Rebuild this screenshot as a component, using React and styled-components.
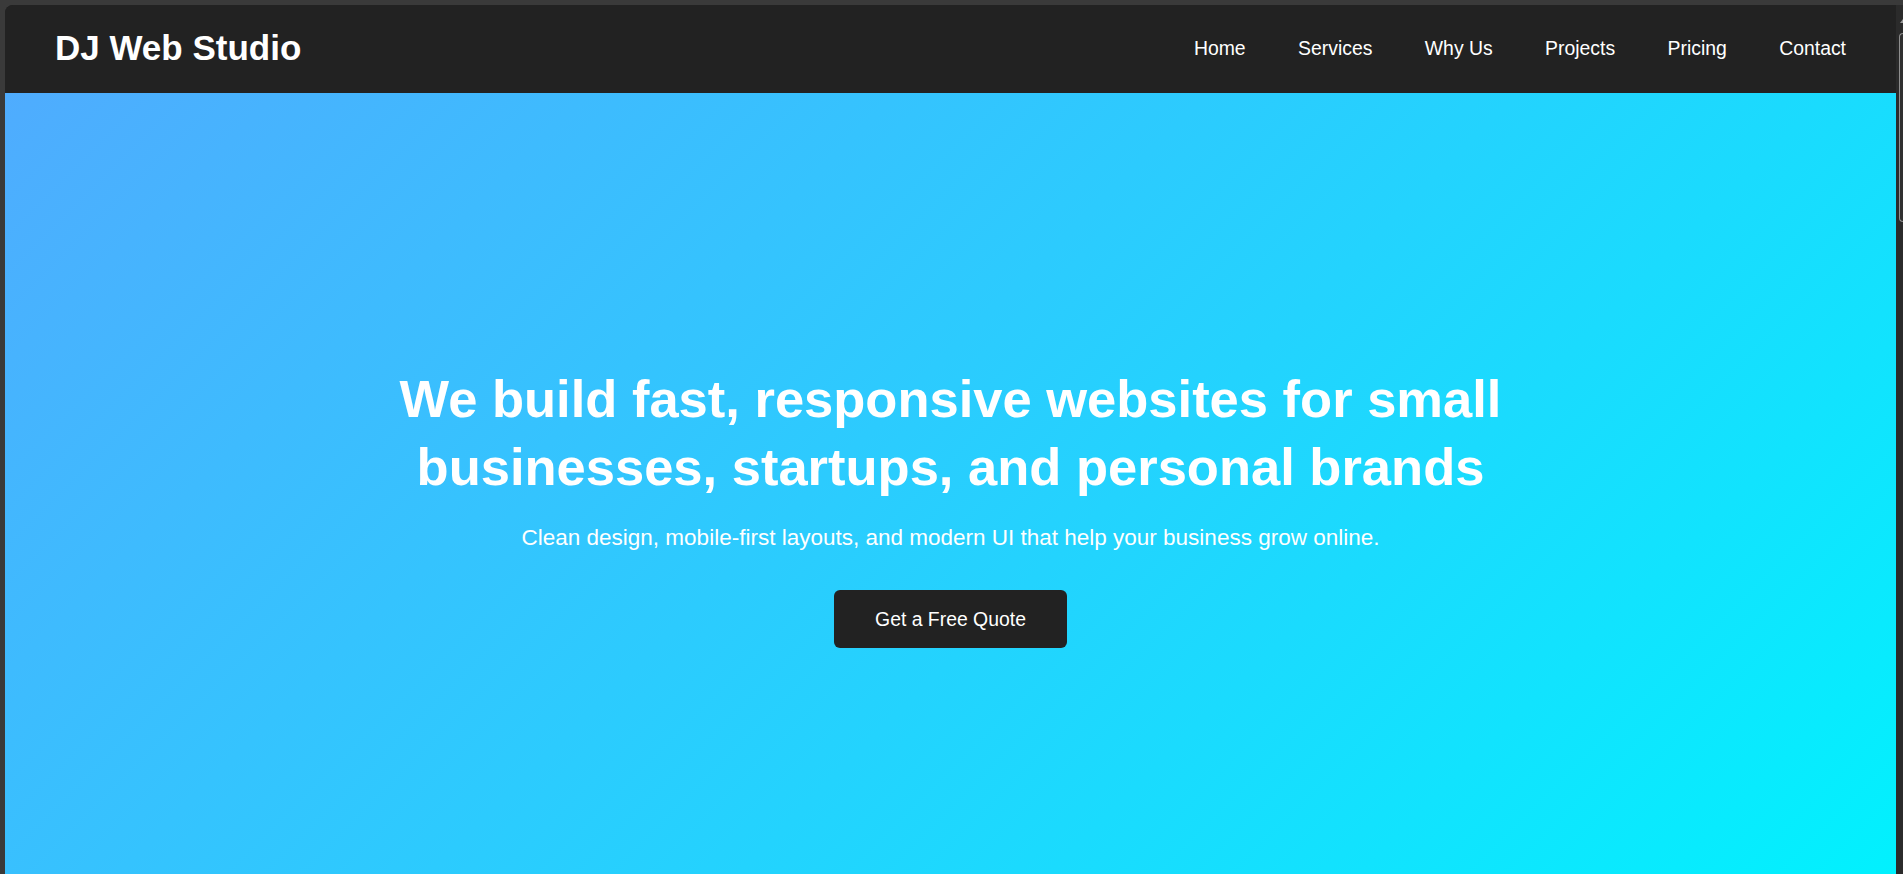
import styled, { createGlobalStyle } from "styled-components";

const GlobalStyle = createGlobalStyle`
    html, body {
        margin: 0;
        padding: 0;
        overflow: hidden;
    }
    body {
        font-family: "Liberation Sans", Arial, sans-serif;
    }
    * {
        box-sizing: border-box;
    }
`

const Frame = styled.div`
    display: flex;
    height: 100vh;
    padding: 5px 0 0 5px;
    background-color: #3a3a3a;
`
const Window = styled.div`
    flex: 1;
    display: flex;
    flex-direction: column;
    overflow: hidden;
    border-top-left-radius: 8px;
    background-color: #222222;
`
const ScrollTrack = styled.div`
    width: 7px;
    display: flex;
    flex-direction: column;
    align-items: flex-end;
    background-color: #2b2b2b;
`
const ScrollArrow = styled.div`
    margin-top: 14px;
    width: 0;
    height: 0;
    border-left: 3px solid transparent;
    border-bottom: 4px solid #9a9a9a;
`
const ScrollThumb = styled.div`
    margin-top: 10px;
    width: 4px;
    height: 189px;
    border: 1px solid #8f8f8f;
    border-right: none;
    border-radius: 4px 0 0 4px;
    background-color: #303030;
`

const Header = styled.header`
    flex-shrink: 0;
    height: 88px;
    display: flex;
    align-items: center;
    justify-content: space-between;
    padding: 0 50px 2px 50px;
    background-color: #222222;
`
const Logo = styled.h1`
    margin: 0;
    color: #ffffff;
    font-size: 35px;
    font-weight: 700;
`
const NavList = styled.ul`
    display: flex;
    gap: 52.4px;
    margin: 0;
    padding: 0;
    list-style: none;
`
const NavLink = styled.a`
    color: #ffffff;
    font-size: 19.4px;
    text-decoration: none;
`

const Hero = styled.section`
    flex-shrink: 0;
    min-height: 827px;
    display: flex;
    flex-direction: column;
    align-items: center;
    justify-content: center;
    text-align: center;
    color: #ffffff;
    background: linear-gradient(135deg, #4facfe 0%, #00f2fe 100%);
`
const Headline = styled.h2`
    max-width: 1150px;
    margin: 0;
    font-size: 52.5px;
    line-height: 68px;
    font-weight: 700;
`
const Subtitle = styled.p`
    margin: 24.5px 0 39px 0;
    font-size: 22.5px;
`
const QuoteButton = styled.button`
    padding: 17.5px 41.5px;
    border: none;
    border-radius: 6px;
    background-color: #222222;
    color: #ffffff;
    font-family: "Liberation Sans", Arial, sans-serif;
    font-size: 19.4px;
    line-height: 23px;
    cursor: pointer;
`

const links = ["Home", "Services", "Why Us", "Projects", "Pricing", "Contact"];

export default function App() {
    return (
        <>
            <GlobalStyle />
            <Frame>
                <Window>
                    <Header>
                        <Logo>DJ Web Studio</Logo>
                        <nav>
                            <NavList>
                                {links.map((l) => (
                                    <li key={l}>
                                        <NavLink href={`#${l.toLowerCase().replace(" ", "")}`}>{l}</NavLink>
                                    </li>
                                ))}
                            </NavList>
                        </nav>
                    </Header>

                    <Hero>
                        <Headline>We build fast, responsive websites for small businesses, startups, and personal brands</Headline>
                        <Subtitle>Clean design, mobile-first layouts, and modern UI that help your business grow online.</Subtitle>
                        <QuoteButton>Get a Free Quote</QuoteButton>
                    </Hero>
                </Window>
                <ScrollTrack>
                    <ScrollArrow />
                    <ScrollThumb />
                </ScrollTrack>
            </Frame>
        </>
    )
}
